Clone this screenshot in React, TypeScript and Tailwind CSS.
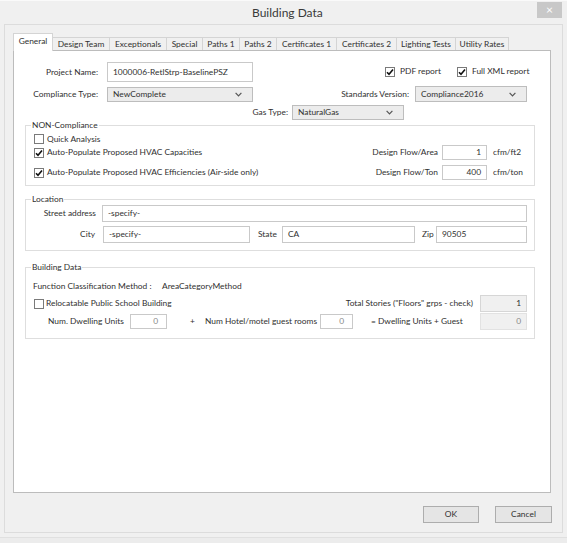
import React from 'react'

const TABS = [
  { label: 'General', w: 'w-[40px]', active: true },
  { label: 'Design Team', w: 'w-[57px]' },
  { label: 'Exceptionals', w: 'w-[57px]' },
  { label: 'Special', w: 'w-[36px]' },
  { label: 'Paths 1', w: 'w-[37px]' },
  { label: 'Paths 2', w: 'w-[37px]' },
  { label: 'Certificates 1', w: 'w-[60px]' },
  { label: 'Certificates 2', w: 'w-[60px]' },
  { label: 'Lighting Tests', w: 'w-[59px]' },
  { label: 'Utility Rates', w: 'w-[53px]' },
]

function Check({ checked = false }: { checked?: boolean }) {
  return (
    <span className="w-[10px] h-[10px] shrink-0 border border-[#7a7a7a] bg-white flex items-center justify-center">
      {checked && (
        <svg width="8" height="8" viewBox="0 0 8 8">
          <path d="M1 4.2 L3 6.3 L7 1.4" fill="none" stroke="#111" strokeWidth="1.6" />
        </svg>
      )}
    </span>
  )
}

function Box({ className = '', children }: { className?: string; children?: React.ReactNode }) {
  return (
    <div className={`border border-[#c9c9c9] bg-white flex items-center px-[5px] shrink-0 ${className}`}>{children}</div>
  )
}

function Select({ className = '', value }: { className?: string; value: string }) {
  return (
    <div className={`border border-[#bdbdbd] bg-[#ececec] flex items-center justify-between pl-[5px] pr-[10px] shrink-0 ${className}`}>
      <span>{value}</span>
      <svg width="7" height="5" viewBox="0 0 7 5">
        <path d="M0.6 0.8 L3.5 3.8 L6.4 0.8" fill="none" stroke="#555" strokeWidth="1.2" />
      </svg>
    </div>
  )
}

function Group({ title, className = '', children }: { title: string; className?: string; children: React.ReactNode }) {
  return (
    <fieldset className={`ml-[11px] w-[510px] border border-[#dedede] pr-[7px] flex flex-col ${className}`}>
      <legend className="ml-[5px] px-[1px] leading-[11px]">{title}</legend>
      {children}
    </fieldset>
  )
}

export default function App() {
  return (
    <div className="w-[567px] h-[543px] bg-[#f0f0f0] text-[8.4px] leading-[11px] whitespace-nowrap text-[#303030] font-['Lato','Liberation_Sans',sans-serif] overflow-hidden">
      {/* title bar */}
      <div className="h-[24px] flex items-start border-t border-[#fafafa]">
        <div className="ml-[252px] mt-[4px] text-[12px] leading-[16px] text-[#3a3a3a]">Building Data</div>
        <div className="ml-auto mr-[5px] mt-[1px] w-[25px] h-[16px] bg-[#c8c8c8] flex items-center justify-center text-white text-[12px] leading-none">
          ×
        </div>
      </div>

      {/* frame */}
      <div className="ml-[4px] w-[559px] h-[509px] border border-[#dcdcdc] pl-[8px] pt-[8px] flex flex-col">
        <div className="flex items-end h-[17px]">
          {TABS.map((t, i) => (
            <div
              key={t.label}
              className={`${t.w} flex items-center justify-center border-t border-r border-[#d4d4d4] ${i === 0 ? 'border-l' : ''} ${
                t.active ? 'h-[18px] bg-white relative z-10 mb-[-1px] pb-[2px] border-[#c4c4c4]' : 'h-[13px] bg-[#f0f0f0]'
              }`}
            >
              {t.label}
            </div>
          ))}
        </div>

        {/* tab panel */}
        <div className="w-[538px] h-[443px] bg-white border border-[#bcbcbc] flex flex-col">
          {/* project name + reports */}
          <div className="mt-[11px] h-[20px] flex items-start">
            <span className="w-[84px] text-right self-center">Project Name:</span>
            <Box className="ml-[9px] w-[146px] h-[20px]">1000006-RetlStrp-BaselinePSZ</Box>
            <div className="ml-[132px] mt-[4px] w-[72px] flex items-center gap-[5px]">
              <Check checked />
              <span>PDF report</span>
            </div>
            <div className="mt-[4px] flex items-center gap-[5px]">
              <Check checked />
              <span>Full XML report</span>
            </div>
          </div>

          <div className="mt-[4px] h-[16px] flex items-center">
            <span className="w-[84px] text-right">Compliance Type:</span>
            <Select className="ml-[9px] w-[146px] h-[15px]" value="NewComplete" />
            <span className="w-[156px] text-right">Standards Version:</span>
            <Select className="ml-[6px] w-[112px] h-[16px]" value="Compliance2016" />
          </div>

          <div className="mt-[3px] h-[15px] flex items-center">
            <span className="w-[274px] text-right">Gas Type:</span>
            <Select className="ml-[4px] w-[112px] h-[15px]" value="NaturalGas" />
          </div>

          {/* NON-Compliance */}
          <Group title="NON-Compliance" className="mt-[0px] pb-[5px]">
            <div className="mt-[3px] h-[10px] flex items-center">
              <span className="ml-[8px]"><Check /></span>
              <span className="ml-[3px]">Quick Analysis</span>
            </div>
            <div className="mt-[1px] h-[15px] flex items-center">
              <span className="ml-[8px]"><Check checked /></span>
              <span className="ml-[3px]">Auto-Populate Proposed HVAC Capacities</span>
              <span className="ml-auto">Design Flow/Area</span>
              <Box className="ml-[4px] w-[45px] h-[15px] justify-end">1</Box>
              <span className="ml-[6px] w-[34px]">cfm/ft2</span>
            </div>
            <div className="mt-[5px] h-[15px] flex items-center">
              <span className="ml-[8px]"><Check checked /></span>
              <span className="ml-[3px]">Auto-Populate Proposed HVAC Efficiencies (Air-side only)</span>
              <span className="ml-auto">Design Flow/Ton</span>
              <Box className="ml-[4px] w-[45px] h-[15px] justify-end">400</Box>
              <span className="ml-[6px] w-[34px]">cfm/ton</span>
            </div>
          </Group>

          {/* Location */}
          <Group title="Location" className="mt-[8px] pb-[7px]">
            <div className="h-[17px] flex items-center">
              <span className="w-[70px] text-right">Street address</span>
              <Box className="ml-[6px] flex-1 h-[17px]">-specify-</Box>
            </div>
            <div className="mt-[4px] h-[17px] flex items-center">
              <span className="w-[69px] text-right">City</span>
              <Box className="ml-[8px] w-[147px] h-[17px]">-specify-</Box>
              <span className="ml-[8px] w-[24px]">State</span>
              <Box className="w-[133px] h-[17px]">CA</Box>
              <span className="ml-[7px] w-[14px]">Zip</span>
              <Box className="flex-1 h-[17px]">90505</Box>
            </div>
          </Group>

          {/* Building Data */}
          <Group title="Building Data" className="mt-[11px] pb-[8px]">
            <div className="mt-[7px] h-[12px] flex items-center pl-[7px]">
              <span className="w-[129px]">Function Classification Method :</span>
              <span>AreaCategoryMethod</span>
            </div>
            <div className="mt-[3px] h-[17px] flex items-center">
              <span className="ml-[8px]"><Check /></span>
              <span className="ml-[2px]">Relocatable Public School Building</span>
              <span className="ml-auto">Total Stories ("Floors" grps - check)</span>
              <div className="ml-[7px] w-[47px] h-[17px] border border-[#d6d6d6] bg-[#f0f0f0] flex items-center justify-end px-[5px]">1</div>
            </div>
            <div className="h-[18px] flex items-center">
              <span className="ml-[22px] w-[82px]">Num. Dwelling Units</span>
              <Box className="w-[37px] h-[15px] justify-end pr-[8px] text-[#888]">0</Box>
              <span className="ml-[23px] w-[15px]">+</span>
              <span className="w-[115px]">Num Hotel/motel guest rooms</span>
              <Box className="w-[33px] h-[15px] justify-end pr-[8px] text-[#888]">0</Box>
              <span className="ml-[18px]">= Dwelling Units + Guest</span>
              <div className="ml-auto w-[47px] h-[17px] border border-[#e2e2e2] bg-[#f0f0f0] flex items-center justify-end px-[5px] text-[#888]">0</div>
            </div>
          </Group>
        </div>

        {/* buttons */}
        <div className="mt-[13px] flex justify-end gap-[16px] pr-[10px]">
          <div className="w-[56px] h-[17px] border border-[#adadad] bg-[#e5e5e5] flex items-center justify-center">OK</div>
          <div className="w-[57px] h-[17px] border border-[#adadad] bg-[#e5e5e5] flex items-center justify-center">Cancel</div>
        </div>
      </div>
      <div className="mt-[4px] border-t border-[#e0e0e0] h-[10px] bg-[#ececec]" />
    </div>
  )
}
